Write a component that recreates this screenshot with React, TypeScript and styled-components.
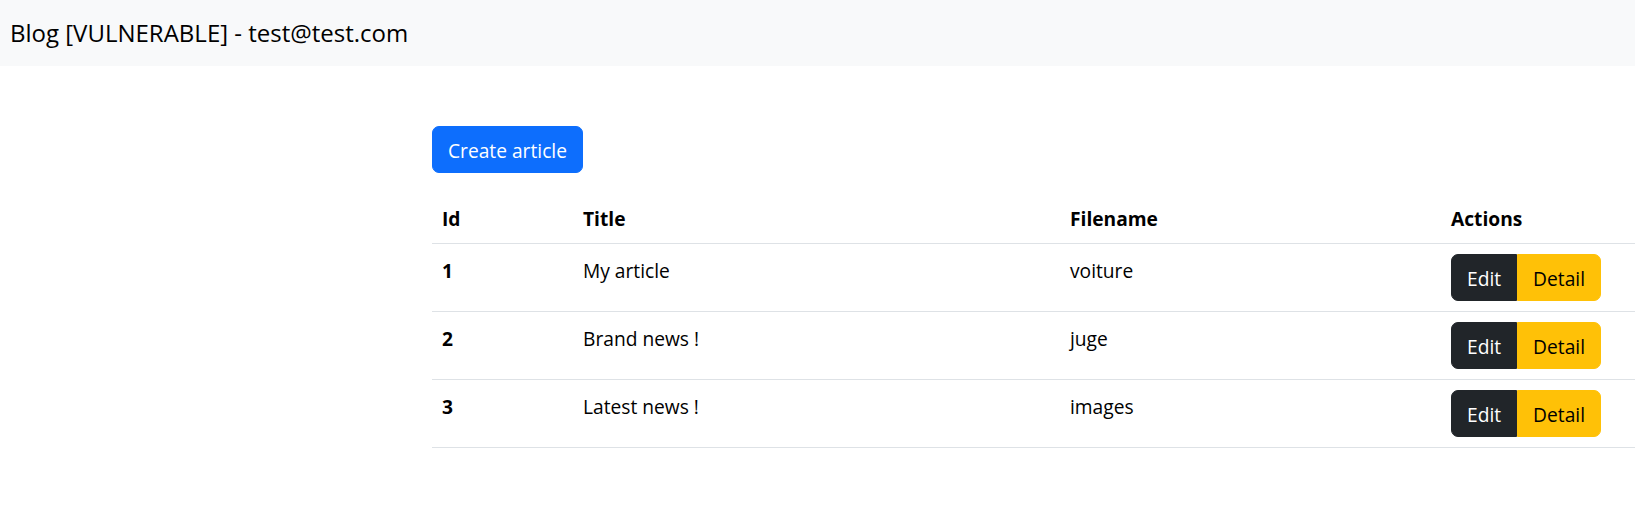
import React from "react";
import styled, { createGlobalStyle } from "styled-components";

const GlobalStyle = createGlobalStyle`
  html, body { margin: 0; padding: 0; background: #fff; }
  body {
    font-family: "Open Sans", "Noto Sans", "Liberation Sans", sans-serif;
    font-size: 19.2px;
    line-height: 30px;
    color: #212529;
  }
  * { box-sizing: border-box; }
`;

const NavBar = styled.nav`
  height: 66px;
  background: #f8f9fa;
  display: flex;
  align-items: center;
  padding: 0 10px;
`;

const Brand = styled.a`
  font-size: 24px;
  line-height: 30px;
  color: #000;
  text-decoration: none;
`;

const Main = styled.main`
  display: grid;
  grid-template-columns: 432px 1fr;
  padding-top: 60px;
`;

const Content = styled.div`
  grid-column: 2;
  display: flex;
  flex-direction: column;
  align-items: flex-start;
  gap: 20px;
`;

const Button = styled.button<{ $variant: "primary" | "dark" | "warning" }>`
  font-family: inherit;
  font-size: 19.2px;
  line-height: 30px;
  padding: 8.5px 15px 6.5px;
  border: 1px solid transparent;
  border-radius: 7px;
  cursor: pointer;
  background: ${(p) =>
    p.$variant === "primary" ? "#0d6efd" : p.$variant === "dark" ? "#212529" : "#ffc107"};
  border-color: ${(p) =>
    p.$variant === "primary" ? "#0d6efd" : p.$variant === "dark" ? "#212529" : "#ffc107"};
  color: ${(p) => (p.$variant === "warning" ? "#000" : "#fff")};
`;

const Group = styled.div`
  display: inline-flex;
  & > ${Button}:not(:first-child) { border-top-left-radius: 0; border-bottom-left-radius: 0; }
  & > ${Button}:not(:last-child) { border-top-right-radius: 0; border-bottom-right-radius: 0; }
`;

const Table = styled.table`
  width: 100%;
  border-collapse: collapse;
  table-layout: fixed;
`;

const Th = styled.th<{ $w: number }>`
  width: ${(p) => p.$w}px;
  text-align: left;
  font-weight: 700;
  padding: 11px 10px 9px;
  line-height: 30px;
  color: #000;
  border-bottom: 1px solid #dee2e6;
  vertical-align: bottom;
`;

const Td = styled.td<{ $bold?: boolean; $action?: boolean }>`
  padding: ${(p) => (p.$action ? "10px" : "12px 10px 8px")};
  line-height: 30px;
  font-weight: ${(p) => (p.$bold ? 700 : 400)};
  color: #000;
  border-bottom: 1px solid #dee2e6;
  vertical-align: top;
`;

const articles = [
  { id: 1, title: "My article", filename: "voiture" },
  { id: 2, title: "Brand news !", filename: "juge" },
  { id: 3, title: "Latest news !", filename: "images" },
];

export default function App() {
  return (
    <>
      <GlobalStyle />
      <NavBar>
        <Brand href="#">Blog [VULNERABLE] - test@test.com</Brand>
      </NavBar>
      <Main>
        <Content>
          <Button $variant="primary">Create article</Button>
          <Table>
            <thead>
              <tr>
                <Th $w={141}>Id</Th>
                <Th $w={487}>Title</Th>
                <Th $w={381}>Filename</Th>
                <Th $w={194}>Actions</Th>
              </tr>
            </thead>
            <tbody>
              {articles.map((a) => (
                <tr key={a.id}>
                  <Td $bold>{a.id}</Td>
                  <Td>{a.title}</Td>
                  <Td>{a.filename}</Td>
                  <Td $action>
                    <Group>
                      <Button $variant="dark">Edit</Button>
                      <Button $variant="warning">Detail</Button>
                    </Group>
                  </Td>
                </tr>
              ))}
            </tbody>
          </Table>
        </Content>
      </Main>
    </>
  );
}
